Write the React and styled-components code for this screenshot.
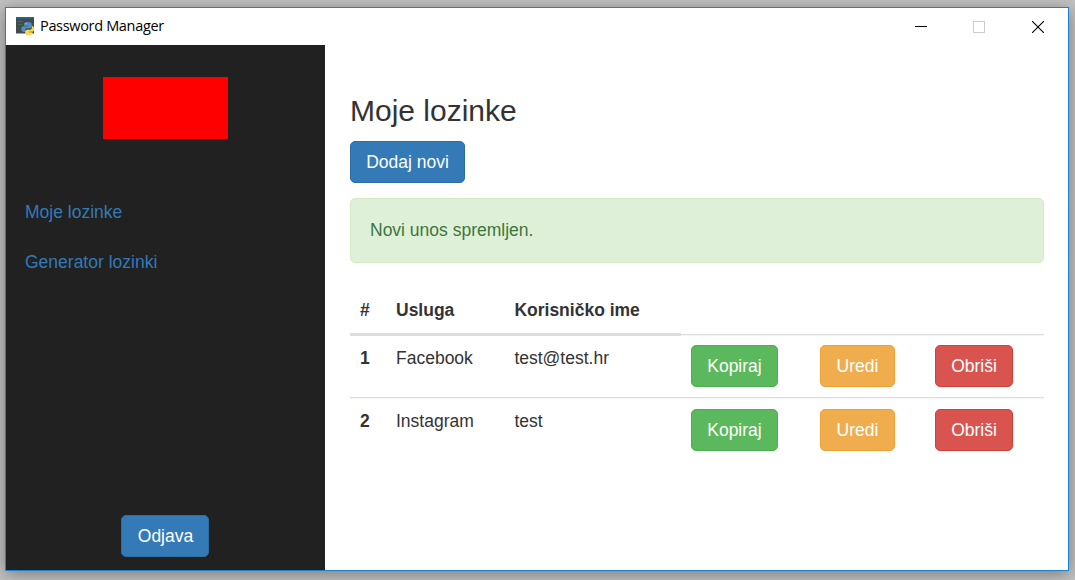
import React from "react";
import styled, { createGlobalStyle, css } from "styled-components";

const GlobalStyle = createGlobalStyle`
  *, *::before, *::after { box-sizing: border-box; }
  html, body { margin: 0; height: 100%; overflow: hidden; }
  body {
    background: #c2c2c2;
    font: 17.5px/25px Arial, "Liberation Sans", sans-serif;
    color: #333;
  }
`;

const Desktop = styled.div`
  height: 580px;
  padding: 7px 6px 9px 5px;
  background: #c2c2c2;
  overflow: hidden;
`;

const Window = styled.div`
  display: flex;
  flex-direction: column;
  height: 564px;
  background: #fff;
  border: 1px solid #1c80d3;
  box-shadow: 0 3px 16px rgba(0, 0, 0, 0.38);
`;

const TitleBar = styled.header`
  display: flex;
  align-items: center;
  flex: 0 0 37px;
  padding: 0 24px 0 10px;
  color: #000;
  svg { display: block; }
`;

const Title = styled.span`
  flex: 1;
  margin: -1px 0 0 6px;
  font: 14.5px/20px "Segoe UI", "Open Sans", sans-serif;
  letter-spacing: -0.33px;
`;

const WindowControls = styled.div`
  display: flex;
  align-items: center;
  gap: 47px;
`;

const MinimizeIcon = styled.svg`
  margin-right: -1px;
`;

const Body = styled.div`
  display: flex;
  flex: 1;
  min-height: 0;
`;

const Sidebar = styled.aside`
  display: flex;
  flex-direction: column;
  align-items: center;
  width: 319px;
  padding: 32px 1px 13px 0;
  background: #212121;
`;

const Logo = styled.div`
  width: 125px;
  height: 62px;
  margin-left: 1px;
  background: #f00;
`;

const Nav = styled.nav`
  display: flex;
  flex-direction: column;
  align-self: stretch;
  gap: 25px;
  flex: 1;
  margin-top: 61px;
  padding-left: 19px;
`;

const NavLink = styled.a`
  color: #337ab7;
  text-decoration: none;
`;

const variants = {
  primary: ["#337ab7", "#2e6da4"],
  success: ["#5cb85c", "#4cae4c"],
  warning: ["#f0ad4e", "#eea236"],
  danger: ["#d9534f", "#d43f3a"],
};

const Button = styled.button`
  width: ${(p) => p.$width}px;
  height: 42px;
  padding: 0;
  border-radius: 5px;
  font: inherit;
  color: #fff;
  ${(p) => css`
    background: ${variants[p.$variant][0]};
    border: 1px solid ${variants[p.$variant][1]};
  `}
`;

const LogoutButton = styled(Button)`
  padding-left: 1px;
`;

const Main = styled.main`
  flex: 1;
  padding: 49px 24px 0 25px;
`;

const Heading = styled.h3`
  margin: 0 0 14px;
  font-size: 30px;
  font-weight: 500;
  line-height: 33px;
`;

const Alert = styled.div`
  height: 65px;
  margin: 15px 0 20px;
  padding: 19px;
  border: 1px solid #d6e9c6;
  border-radius: 5px;
  background: #dff0d8;
  color: #3c763d;
`;

const Table = styled.div`
  display: flex;
  flex-direction: column;
`;

const Row = styled.div`
  display: grid;
  grid-template-columns: 36px 118.400px 176.600px 129px 115px 119px;
`;

const HeadRow = styled(Row)`
  height: 53px;
`;

const HeadCell = styled.div`
  padding: 15px 10px 0;
  border-bottom: 3px solid #ddd;
  font-weight: 700;
`;

const HeadRule = styled.div`
  grid-column: 4 / -1;
  align-self: end;
  height: 2px;
  border-top: 1px solid #ddd;
  background: #f4f4f4;
`;

const ItemRow = styled(Row)`
  height: ${(p) => (p.$divided ? 64 : 61)}px;
  padding-top: ${(p) => (p.$divided ? 11 : 9)}px;
  border-top: ${(p) => (p.$divided ? "1px solid #ddd" : "none")};
  box-shadow: ${(p) => (p.$divided ? "inset 0 1px #f4f4f4" : "none")};
`;

const Cell = styled.div`
  padding: ${(p) => (p.$divided ? 0 : 1)}px 10px 0;
  font-weight: ${(p) => (p.$bold ? 700 : 400)};
`;

const ActionCell = styled.div`
  padding: 0 10px;
`;

const entries = [
  { id: 1, service: "Facebook", user: "test@test.hr" },
  { id: 2, service: "Instagram", user: "test" },
];

const AppIcon = () => (
  <svg width="18" height="19" viewBox="0 0 18 19">
    <path d="M0 0h18v16.500H0z" fill="#434b4e" />
    <path d="M0 0h18v1.700H0z" fill="#2c6389" />
    <path d="M2 4.500h5M2 7.500h4" stroke="#39734a" />
    <path d="M11.500 5c-2.600 0-3.500.9-3.500 2.200v1.500h4v.6H7.500c-1.500 0-2.200 1.200-2.200 2.800s.9 2.900 2.200 2.900H9v-1.600c0-1.300.9-2.100 2-2.100h3c1.100 0 1.800-.8 1.800-1.800V7.200c0-1.400-1.500-2.200-4.300-2.200z" fill="#4f8cc0" />
    <path d="M15.900 9v1.700c0 1.200-.8 2.100-1.900 2.100h-3c-1.100 0-1.800.8-1.800 1.800v1.600c0 1.300 1.500 2.100 3.700 2.100s3.600-.8 3.600-2.100v-1h-3.500v-.5h3.500c1.100 0 1.500-1.200 1.500-2.900S17.400 9 15.900 9z" fill="#ffd754" />
    <path d="M9.500 6.300h1v1h-1z" fill="#dce9f2" />
    <path d="M14 16h1v1h-1z" fill="#fff5c8" />
  </svg>
);

export default function App() {
  return (
    <>
      <GlobalStyle />
      <Desktop>
        <Window>
          <TitleBar>
            <AppIcon />
            <Title>Password Manager</Title>
            <WindowControls>
              <MinimizeIcon width="12" height="12" viewBox="0 0 12 12">
                <path d="M0 5.500h12" stroke="#000" />
              </MinimizeIcon>
              <svg width="12" height="12" viewBox="0 0 12 12">
                <rect x=".5" y=".5" width="11" height="11" fill="none" stroke="#ccc" />
              </svg>
              <svg width="12" height="12" viewBox="0 0 12 12">
                <path d="M0 0l12 12M12 0L0 12" stroke="#000" strokeWidth="1.100" />
              </svg>
            </WindowControls>
          </TitleBar>
          <Body>
            <Sidebar>
              <Logo />
              <Nav>
                <NavLink>Moje lozinke</NavLink>
                <NavLink>Generator lozinki</NavLink>
              </Nav>
              <LogoutButton $variant="primary" $width={88}>Odjava</LogoutButton>
            </Sidebar>
            <Main>
              <Heading>Moje lozinke</Heading>
              <Button $variant="primary" $width={115}>Dodaj novi</Button>
              <Alert>Novi unos spremljen.</Alert>
              <Table>
                <HeadRow>
                  <HeadCell>#</HeadCell>
                  <HeadCell>Usluga</HeadCell>
                  <HeadCell>Korisničko ime</HeadCell>
                  <HeadRule />
                </HeadRow>
                {entries.map((e, i) => (
                  <ItemRow key={e.id} $divided={i > 0}>
                    <Cell $bold $divided={i > 0}>{e.id}</Cell>
                    <Cell $divided={i > 0}>{e.service}</Cell>
                    <Cell $divided={i > 0}>{e.user}</Cell>
                    <ActionCell>
                      <Button $variant="success" $width={87}>Kopiraj</Button>
                    </ActionCell>
                    <ActionCell>
                      <Button $variant="warning" $width={75}>Uredi</Button>
                    </ActionCell>
                    <ActionCell>
                      <Button $variant="danger" $width={78}>Obriši</Button>
                    </ActionCell>
                  </ItemRow>
                ))}
              </Table>
            </Main>
          </Body>
        </Window>
      </Desktop>
    </>
  );
}
